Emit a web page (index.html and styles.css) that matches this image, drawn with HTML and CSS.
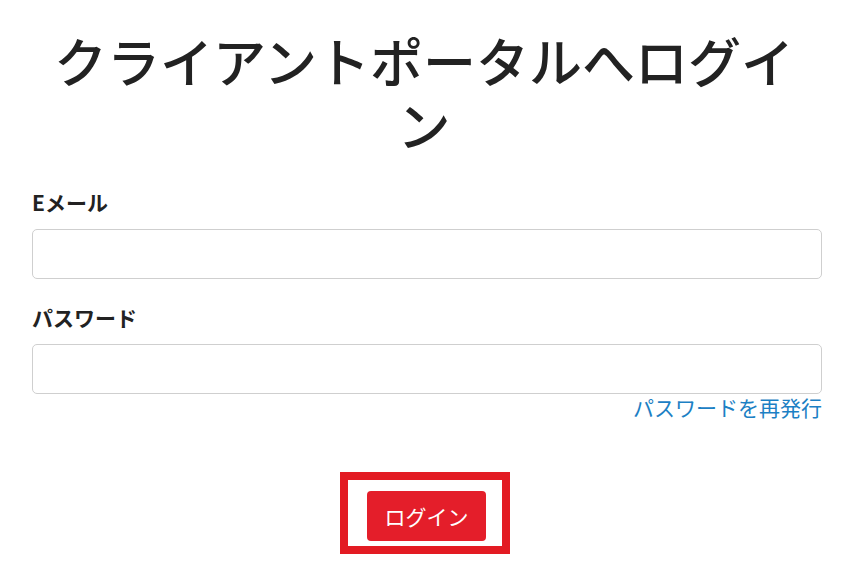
FILE: index.html
```html
<!DOCTYPE html>
<html lang="ja">
<head>
<meta charset="utf-8">
<title>クライアントポータルへログイン</title>
<link rel="stylesheet" href="styles.css">
</head>
<body>
<main class="page">
  <h1 class="title">クライアントポータルへログイン</h1>
  <form class="form">
    <div class="field">
      <label class="label" for="email">Eメール</label>
      <input class="input" id="email" type="email">
    </div>
    <div class="field field-last">
      <label class="label" for="pw">パスワード</label>
      <input class="input" id="pw" type="password">
    </div>
    <div class="forgot"><a href="#" class="forgot-link">パスワードを再発行</a></div>
    <div class="actions">
      <div class="highlight">
        <button type="button" class="btn">ログイン</button>
      </div>
    </div>
  </form>
</main>
</body>
</html>
```

FILE: styles.css
```css
html, body {
  margin: 0;
  padding: 0;
  background: #ffffff;
}
body {
  font-family: "Noto Sans CJK JP", "Noto Sans", sans-serif;
  color: #222222;
}
.page {
  padding: 28px 24px 0 32px;
}
.title {
  margin: 0;
  padding-right: 6px;
  font-size: 53px;
  line-height: 64px;
  font-weight: 500;
  text-align: center;
  color: #222222;
}
.form {
  margin-top: 31px;
}
.field {
  display: flex;
  flex-direction: column;
  margin-bottom: 23px;
}
.field-last {
  margin-bottom: 0;
}
.label {
  font-size: 21px;
  line-height: 30px;
  font-weight: 700;
  margin-bottom: 12px;
}
.input {
  box-sizing: border-box;
  height: 50px;
  width: 100%;
  border: 1px solid #cfcfcf;
  border-radius: 5px;
  background: #fff;
  margin: 0;
  padding: 0 12px;
  font: inherit;
}
.forgot {
  text-align: right;
  font-size: 21px;
  line-height: 26px;
}
.forgot-link {
  color: #1c80c4;
  text-decoration: none;
}
.actions {
  display: flex;
  justify-content: center;
  margin-top: 52px;
  padding-right: 4px;
}
.highlight {
  border: 8px solid #e31b23;
  padding: 11px 16px 5px 19px;
}
.btn {
  display: block;
  box-sizing: border-box;
  width: 119px;
  height: 50px;
  border: none;
  border-radius: 4px;
  background: #e41e2a;
  color: #ffffff;
  font-family: "Noto Sans CJK JP", "Noto Sans", sans-serif;
  font-size: 21px;
  line-height: 50px;
  padding: 0;
}
```
